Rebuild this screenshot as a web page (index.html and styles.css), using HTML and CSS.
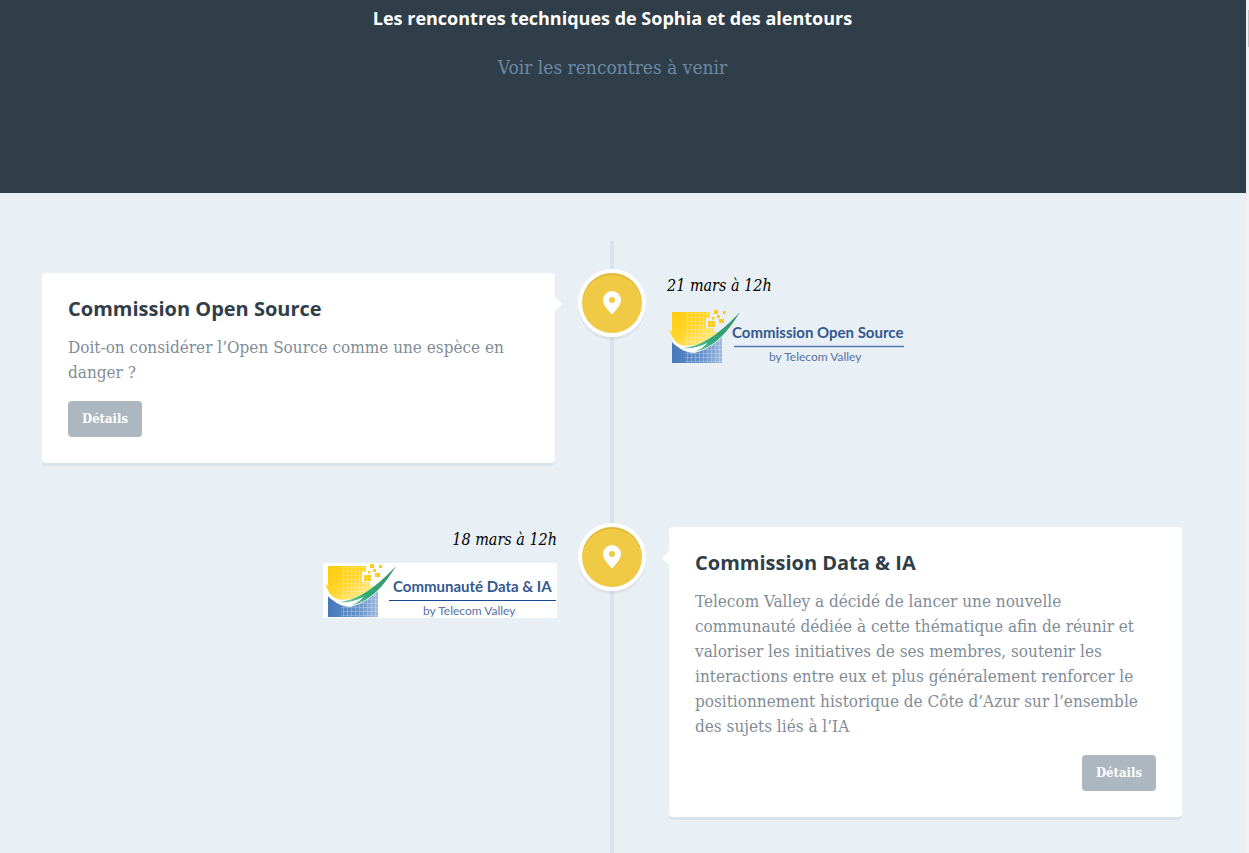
FILE: index.html
```html
<!DOCTYPE html>
<html lang="fr">
<head>
<meta charset="utf-8">
<title>Les rencontres techniques de Sophia</title>
<link rel="stylesheet" href="styles.css">
</head>
<body>
<svg class="defs" aria-hidden="true">
  <defs>
    <linearGradient id="sun" x1="0" y1="0" x2="1" y2="1">
      <stop offset="0" stop-color="#ffcb08"/><stop offset=".45" stop-color="#ffd52e"/><stop offset="1" stop-color="#fff3b8"/>
    </linearGradient>
    <linearGradient id="sea" x1="0" y1="0" x2="1" y2="0">
      <stop offset="0" stop-color="#4678bb"/><stop offset=".6" stop-color="#6590c8"/><stop offset="1" stop-color="#9fbadd"/>
    </linearGradient>
    <linearGradient id="leaf" x1="0" y1="1" x2="1" y2="0">
      <stop offset="0" stop-color="#7fd0ae"/><stop offset=".4" stop-color="#2fa877"/><stop offset="1" stop-color="#3b8f68"/>
    </linearGradient>
    <pattern id="mesh" width="4" height="4" patternUnits="userSpaceOnUse">
      <path d="M0 .5H4M.5 0V4" stroke="#fff" stroke-width=".6" opacity=".4"/>
    </pattern>
    <symbol id="emblem" viewBox="0 0 75 55" overflow="visible">
      <path d="M5 3H43V9H39V19H47V23H53C44 32 30 38 18 38C9 38 5 28 2 21L5 23Z" fill="url(#sun)"/>
      <path d="M18 3H43V9H39V19H47V23H53C44 32 30 38 18 38Z" fill="url(#mesh)"/>
      <path d="M5 33C11 42 27 40 38 34L55 23V54H5Z" fill="url(#sea)"/>
      <path d="M18 38C30 39 44 32 55 23V54H18Z" fill="url(#mesh)"/>
      <path d="M2 21C5 30 10 37 20 37C41 37 59 19 73 2C61 24 48 39 27 44C12 43 5 34 2 21Z" fill="#fff"/>
      <path d="M16 39C38 37 57 20 73 3C61 23 47 39 27 43C34 40 38 37 40 34C33 38 24 40 16 39Z" fill="url(#leaf)"/>
      <path d="M41 12H48V18H41ZM47 1H51V5H47ZM56 2H59V5H56ZM50 6H53V9H50ZM45 8H47.500V10.500H45ZM52 10H57V14H52Z" fill="#ffcb16"/>
      <path d="M44.500 12V18M41 15H48" stroke="#fff" stroke-width=".5" opacity=".6"/>
    </symbol>
    <symbol id="pin" viewBox="0 0 18 24">
      <path fill="#fff" fill-rule="evenodd" d="M9 0A9 9 0 0 0 0 9C0 14 5 19 9 23.500C13 19 18 14 18 9A9 9 0 0 0 9 0ZM9 6A3 3 0 1 1 9 12A3 3 0 0 1 9 6Z"/>
    </symbol>
  </defs>
</svg>
<div class="page">
  <header class="banner">
    <h1 class="banner-title">Les rencontres techniques de Sophia et des alentours</h1>
    <p class="banner-more"><a href="#rencontres">Voir les rencontres à venir</a></p>
  </header>
  <main class="content" id="rencontres">
    <div class="timeline">
      <article class="event">
        <div class="card">
          <h2>Commission Open Source</h2>
          <p>Doit-on considérer l’Open Source comme une espèce en danger ?</p>
          <a class="details" href="#open-source">Détails</a>
        </div>
        <div class="marker"><svg width="18" height="24" aria-hidden="true"><use href="#pin"/></svg></div>
        <div class="media">
          <time class="date">21 mars à 12h</time>
          <svg class="logo" width="236" height="55" role="img" aria-label="Commission Open Source by Telecom Valley">
            <use href="#emblem" width="75" height="55"/>
            <text class="logo-name" x="65" y="29">Commission Open Source</text>
            <path d="M67 37.500H237" stroke="#4f76ae" stroke-width="1.500"/>
            <text class="logo-by" x="102" y="52">by Telecom Valley</text>
          </svg>
        </div>
      </article>
      <article class="event event-flipped">
        <div class="card">
          <h2>Commission Data &amp; IA</h2>
          <p>Telecom Valley a décidé de lancer une nouvelle communauté dédiée à cette thématique afin de réunir et valoriser les initiatives de ses membres, soutenir les interactions entre eux et plus généralement renforcer le positionnement historique de Côte d’Azur sur l’ensemble des sujets liés à l’IA</p>
          <a class="details" href="#data-ia">Détails</a>
        </div>
        <div class="marker"><svg width="18" height="24" aria-hidden="true"><use href="#pin"/></svg></div>
        <div class="media">
          <time class="date">18 mars à 12h</time>
          <svg class="logo logo-white" width="234" height="55" role="img" aria-label="Communauté Data &amp; IA by Telecom Valley">
            <use href="#emblem" width="75" height="55"/>
            <text class="logo-name" x="70" y="29">Communauté Data &amp; IA</text>
            <path d="M66 37.500H233" stroke="#164a91"/>
            <text class="logo-by" x="100" y="52">by Telecom Valley</text>
          </svg>
        </div>
      </article>
    </div>
  </main>
</div>
<div class="scroll-track" aria-hidden="true"><div class="scroll-thumb"></div></div>
</body>
</html>
```
FILE: styles.css
```css
* { box-sizing: border-box; }

body {
  margin: 0;
  min-height: 100vh;
  display: flex;
  background: #e9f0f5;
  color: #7f8c97;
  font-family: "DejaVu Serif Condensed", "DejaVu Serif", serif;
  font-size: 17px;
  line-height: 25px;
}

h1, h2, p { margin: 0; }
a { text-decoration: none; }

.defs { position: absolute; width: 0; height: 0; }

.page {
  flex: 1;
  min-width: 0;
  display: flex;
  flex-direction: column;
}

.banner {
  padding: 0 21px 112px 0;
  background: #303e49;
  text-align: center;
}

.banner-title {
  margin-bottom: 17px;
  color: #fff;
  font-family: "Open Sans", sans-serif;
  font-size: 18px;
  line-height: 36px;
}

.banner-more { font-size: 19px; line-height: 28px; }
.banner-more a { color: #6b8aa5; }

.content {
  flex: 1;
  display: flex;
  padding: 48px 64px 0 42px;
}

.timeline {
  position: relative;
  flex: 1;
  display: flex;
  flex-direction: column;
  gap: 64px;
  padding: 32px 0;
}

.timeline::before {
  content: "";
  position: absolute;
  top: 0;
  bottom: 0;
  left: calc(50% - 2px);
  width: 4px;
  background: #d7e4ed;
}

.event {
  display: grid;
  grid-template-columns: 1fr 114px 1fr;
  grid-template-areas: "left middle right";
  align-items: start;
}

.card {
  grid-area: left;
  position: relative;
  display: flex;
  flex-direction: column;
  align-items: flex-start;
  gap: 16px;
  padding: 26px;
  border-radius: 4px;
  background: #fff;
  box-shadow: 0 3px 0 #d7e4ed;
}

.card::before {
  content: "";
  position: absolute;
  top: 24px;
  left: 100%;
  border: 7px solid transparent;
  border-left-color: #fff;
}

.card h2 {
  color: #303e49;
  font-family: "Open Sans", sans-serif;
  font-size: 20px;
  font-weight: 700;
  line-height: 20px;
}

.details {
  padding: 0 14px;
  border-radius: 4px;
  background: #acb7c0;
  color: #fff;
  font-size: 13px;
  font-weight: bold;
  line-height: 36px;
}

.marker {
  grid-area: middle;
  justify-self: center;
  position: relative;
  display: grid;
  place-items: center;
  width: 60px;
  height: 60px;
  border-radius: 50%;
  background: #f0ca45;
  box-shadow: 0 0 0 4px #fff, inset 0 2px 0 rgba(0, 0, 0, .08), 0 3px 0 4px rgba(0, 0, 0, .05);
}

.media {
  grid-area: right;
  display: flex;
  flex-direction: column;
  align-items: flex-start;
  gap: 10px;
  margin: 0 -2px;
}

.date {
  color: #000;
  font-size: 16px;
  font-style: italic;
  line-height: 26px;
}

.logo { display: block; overflow: visible; }
.logo-white { background: #fff; }
.logo-name { fill: #34588f; font: bold 15px Lato, sans-serif; }
.logo-by { fill: #5870a5; font: 12px Lato, sans-serif; }

.event-flipped .card { grid-area: right; }
.event-flipped .card::before {
  left: auto;
  right: 100%;
  border-color: transparent #fff transparent transparent;
}
.event-flipped .details { align-self: flex-end; }
.event-flipped .media { grid-area: left; align-items: flex-end; }

.scroll-track {
  width: 3px;
  padding: 10px 0 0 2px;
  background: #f1f1f1;
}

.scroll-thumb { height: 37px; background: #c1c1c1; }
```
